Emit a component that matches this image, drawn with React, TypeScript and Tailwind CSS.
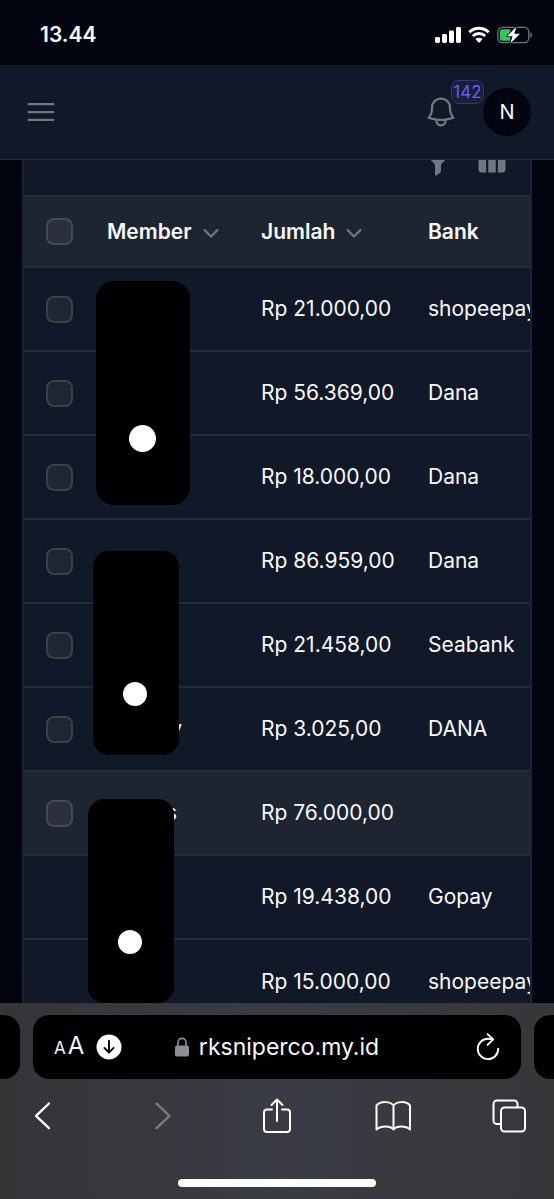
import type { ReactNode } from "react";
import {
  HiMiniChevronDown,
  HiMiniFunnel,
  HiMiniViewColumns,
  HiOutlineBars3,
  HiOutlineBell,
} from "react-icons/hi2";

type TRow = {
  id: number;
  member?: ReactNode;
  amount: string;
  bank: string;
  selectable: boolean;
  active?: boolean;
};

const rows: TRow[] = [
  { id: 1, amount: "Rp 21.000,00", bank: "shopeepay", selectable: true },
  { id: 2, amount: "Rp 56.369,00", bank: "Dana", selectable: true },
  { id: 3, amount: "Rp 18.000,00", bank: "Dana", selectable: true },
  { id: 4, amount: "Rp 86.959,00", bank: "Dana", selectable: true },
  { id: 5, amount: "Rp 21.458,00", bank: "Seabank", selectable: true },
  {
    id: 6,
    member: <span className="block w-[75px] text-right">y</span>,
    amount: "Rp 3.025,00",
    bank: "DANA",
    selectable: true,
  },
  {
    id: 7,
    member: <span className="block w-[70px] text-right">s</span>,
    amount: "Rp 76.000,00",
    bank: "",
    selectable: true,
    active: true,
  },
  { id: 8, amount: "Rp 19.438,00", bank: "Gopay", selectable: false },
  { id: 9, amount: "Rp 15.000,00", bank: "shopeepay", selectable: false },
];

const StatusBar = () => (
  <div className="flex h-[65px] shrink-0 items-center justify-between bg-[#020510] pr-[21px] pl-10">
    <span className="pt-1 text-[21px] leading-6 font-semibold">13.44</span>
    <div className="flex items-center gap-[7px] pt-1">
      {/* Signal */}
      <svg width="26" height="18" viewBox="0 0 26 18" fill="#fff">
        <rect x="0" y="11" width="5" height="6" rx="1.4" />
        <rect x="7" y="8" width="5" height="9" rx="1.4" />
        <rect x="14" y="4.5" width="5" height="12.5" rx="1.4" />
        <rect x="21" y="1" width="5" height="16" rx="1.4" />
      </svg>
      {/* Wifi */}
      <svg width="22" height="18" viewBox="0 0 22 18" fill="none">
        <path
          d="M1.3 6.2a13.8 13.8 0 0 1 19.4 0"
          stroke="#fff"
          strokeWidth="3"
        />
        <path
          d="M4.8 10a8.9 8.9 0 0 1 12.4 0"
          stroke="#fff"
          strokeWidth="2.8"
        />
        <path d="M11 17l3.6-3.9a5.3 5.3 0 0 0-7.2 0z" fill="#fff" />
      </svg>
      {/* Battery */}
      <svg width="36" height="18" viewBox="0 0 36 18" fill="none">
        <rect
          x="0.8"
          y="1.3"
          width="31"
          height="15.4"
          rx="4.6"
          stroke="#73767d"
          strokeWidth="1.3"
        />
        <path d="M33.4 6.3c2.2.9 2.2 4.5 0 5.4z" fill="#73767d" />
        <path
          d="M5.6 3.2h7.6v11.6H5.6a2.8 2.8 0 0 1-2.8-2.8V6a2.8 2.8 0 0 1 2.8-2.8z"
          fill="#34c759"
        />
        <path
          d="M19.6.6 10 10.2h5.6l-2.4 7.2 9.8-9.7h-5.8z"
          fill="#fff"
          stroke="#020510"
          strokeWidth="1.6"
          paintOrder="stroke"
          strokeLinejoin="round"
        />
      </svg>
    </div>
  </div>
);

const TopBar = () => (
  <header className="flex h-[95px] shrink-0 items-center justify-between border-b border-[#272d3a] bg-[#111827] pr-[23px] pl-[23px]">
    <button type="button" aria-label="Open menu" className="text-[#717683]">
      <HiOutlineBars3 className="size-9" />
    </button>
    <div className="flex items-center gap-6">
      <button
        type="button"
        aria-label="Notifications"
        className="relative text-[#717683]"
      >
        <HiOutlineBell className="size-9" />
        <span className="absolute -top-[14px] left-7 flex h-6 w-[33px] items-center justify-center rounded-lg border border-[#35377a] bg-[#181d3d] text-[17px] leading-6 text-[#6366e8]">
          142
        </span>
      </button>
      <button
        type="button"
        className="flex size-12 items-center justify-center rounded-full bg-[#020510] text-xl"
      >
        N
      </button>
    </div>
  </header>
);

type TColumnProps = { label: string; sortable?: boolean };

const ColumnHead = ({ label, sortable }: TColumnProps) => (
  <th scope="col" className="pl-3 text-left font-semibold">
    {sortable ? (
      <button type="button" className="flex items-center gap-1">
        {label}
        <HiMiniChevronDown className="size-[30px] text-[#717683]" />
      </button>
    ) : (
      label
    )}
  </th>
);

const Checkbox = ({ label }: { label: string }) => (
  <input
    type="checkbox"
    aria-label={label}
    className="block size-[27px] appearance-none rounded-lg border-2 border-white/12 bg-white/6"
  />
);

const MemberTable = () => (
  <table className="w-full table-fixed border-collapse text-[21px] leading-7 whitespace-nowrap">
    <colgroup>
      <col className="w-[71px]" />
      <col className="w-[154px]" />
      <col className="w-[167px]" />
      <col />
    </colgroup>
    <thead>
      <tr className="h-[71px] border-t-2 border-[#292f3b] bg-[#1e2430]">
        <th scope="col" className="pl-[22px]">
          <Checkbox label="Select all" />
        </th>
        <ColumnHead label="Member" sortable />
        <ColumnHead label="Jumlah" sortable />
        <ColumnHead label="Bank" />
      </tr>
    </thead>
    <tbody>
      {rows.map((row) => (
        <tr
          key={row.id}
          className={
            row.active
              ? "h-[84px] border-t-2 border-[#262c38] bg-[#1e2430]"
              : "h-[84px] border-t-2 border-[#262c38]"
          }
        >
          <td className="pl-[22px]">
            {row.selectable && <Checkbox label={`Select row ${row.id}`} />}
          </td>
          <td className="pl-3">{row.member}</td>
          <td className="pl-3">{row.amount}</td>
          <td className="pl-3">{row.bank}</td>
        </tr>
      ))}
    </tbody>
  </table>
);

const Browser = () => (
  <footer className="shrink-0 bg-linear-to-r from-[#353538] via-[#3a3c44] to-[#37373a] pt-3 pb-3">
    <div className="flex h-16 gap-[13px]">
      <div className="w-5 shrink-0 rounded-r-2xl bg-black" />
      <div className="grid min-w-0 flex-1 grid-cols-[1fr_auto_1fr] items-center rounded-2xl bg-black px-[21px]">
        <div className="flex items-center gap-3">
          <button
            type="button"
            aria-label="Text size"
            className="flex items-baseline gap-[2px] leading-8"
          >
            <span className="text-[17px]">A</span>
            <span className="text-2xl">A</span>
          </button>
          <button type="button" aria-label="Downloads">
            <svg width="26" height="26" viewBox="0 0 26 26" fill="none">
              <circle cx="13" cy="13" r="12.5" fill="#fff" />
              <path
                d="M13 6.8v11.6M8.4 13.9l4.6 4.6 4.6-4.6"
                stroke="#000"
                strokeWidth="1.9"
                strokeLinecap="round"
                strokeLinejoin="round"
              />
            </svg>
          </button>
        </div>
        <button type="button" className="flex items-center gap-[10px]">
          <svg width="14" height="20" viewBox="0 0 14 20" fill="none">
            <rect y="8.5" width="14" height="11" rx="2" fill="#8e8e96" />
            <path
              d="M3 9V5.4a4 4 0 0 1 8 0V9"
              stroke="#8e8e96"
              strokeWidth="1.7"
            />
          </svg>
          <span className="text-[23px] leading-8">rksniperco.my.id</span>
        </button>
        <button type="button" aria-label="Reload" className="justify-self-end">
          <svg
            width="24"
            height="28"
            viewBox="0 0 24 28"
            fill="none"
            stroke="#fff"
            strokeWidth="1.9"
            strokeLinecap="round"
            strokeLinejoin="round"
          >
            <path d="M22.2 15.7A10.2 10.2 0 1 1 12 5.7c1.7 0 3.2.1 4.6.7" />
            <path d="M11.600 1.100 17.200 6.400 11.600 11.900" />
          </svg>
        </button>
      </div>
      <div className="w-5 shrink-0 rounded-l-2xl bg-black" />
    </div>
    <nav className="flex justify-between pt-[18px] pr-[27px] pb-11 pl-[25px]">
      <button type="button" aria-label="Back">
        <svg width="36" height="38" viewBox="0 0 36 38" fill="none">
          <path
            d="M24 6.5 11 18.8l13 12.4"
            stroke="#fff"
            strokeWidth="2.3"
            strokeLinecap="round"
            strokeLinejoin="round"
          />
        </svg>
      </button>
      <button type="button" aria-label="Forward">
        <svg width="36" height="38" viewBox="0 0 36 38" fill="none">
          <path
            d="M14.5 6.5l13 12.3-13 12.4"
            stroke="#7b7c83"
            strokeWidth="2.3"
            strokeLinecap="round"
            strokeLinejoin="round"
          />
        </svg>
      </button>
      <button type="button" aria-label="Share">
        <svg
          width="36"
          height="38"
          viewBox="0 0 36 38"
          fill="none"
          stroke="#fff"
          strokeWidth="2"
          strokeLinecap="round"
          strokeLinejoin="round"
        >
          <path d="M14 12.5H9a3 3 0 0 0-3 3V32a3 3 0 0 0 3 3h20a3 3 0 0 0 3-3V15.500a3 3 0 0 0-3-3h-5" />
          <path d="M19 24V2.500M13.500 8 19 2.500 24.500 8" />
        </svg>
      </button>
      <button type="button" aria-label="Bookmarks">
        <svg
          width="36"
          height="38"
          viewBox="0 0 36 38"
          fill="none"
          stroke="#fff"
          strokeWidth="2"
          strokeLinecap="round"
          strokeLinejoin="round"
        >
          <path d="M18.500 8.500C15.500 4.500 6 3.500 1.500 8.500V32.500C6 28.500 15.500 28.500 18.500 32.500C21.500 28.500 31 28.500 35 32.500V8.500C31 3.500 21.500 4.500 18.500 8.500V32.500" />
        </svg>
      </button>
      <button type="button" aria-label="Tabs">
        <svg
          width="36"
          height="38"
          viewBox="0 0 36 38"
          fill="none"
          stroke="#fff"
          strokeWidth="2"
          strokeLinejoin="round"
        >
          <path d="M10 27H6a3.500 3.500 0 0 1-3.500-3.500V7A3.500 3.500 0 0 1 6 3.500h17A3.500 3.500 0 0 1 26.500 7v3" />
          <rect x="10" y="10.500" width="24" height="24" rx="3.500" />
        </svg>
      </button>
    </nav>
    <div className="mx-auto h-2 w-[198px] rounded-full bg-white" />
  </footer>
);

const App = () => (
  <div className="flex h-screen flex-col overflow-hidden bg-[#020510] font-['Inter',sans-serif] text-[#f8f9fb]">
    <StatusBar />
    <TopBar />
    <main className="min-h-0 flex-1 overflow-hidden px-[22px]">
      <div className="relative h-full overflow-hidden border-x-2 border-[#1c2230] bg-[#111827]">
        {/* Table tools, scrolled partly under the top bar */}
        <div className="flex h-[35px] items-end justify-end gap-6 overflow-hidden pr-[23px] pb-[18px] text-[#717683]">
          <button type="button" aria-label="Filter">
            <HiMiniFunnel className="size-[30px]" />
          </button>
          <button type="button" aria-label="Toggle columns">
            <HiMiniViewColumns className="size-[30px]" />
          </button>
        </div>
        <MemberTable />

        {/* Marker strokes covering the member names */}
        <div className="absolute top-[121px] left-[72px] h-56 w-[94px] rounded-[18px] bg-black">
          <div className="absolute top-36 left-[33px] size-[27px] rounded-full bg-white" />
        </div>
        <div className="absolute top-[391px] left-[69px] h-51 w-[86px] rounded-2xl bg-black">
          <div className="absolute top-[131px] left-[30px] size-6 rounded-full bg-white" />
        </div>
        <div className="absolute top-[639px] left-16 h-51 w-[86px] rounded-2xl bg-black">
          <div className="absolute top-[131px] left-[30px] size-6 rounded-full bg-white" />
        </div>
      </div>
    </main>
    <Browser />
  </div>
);

export default App;
